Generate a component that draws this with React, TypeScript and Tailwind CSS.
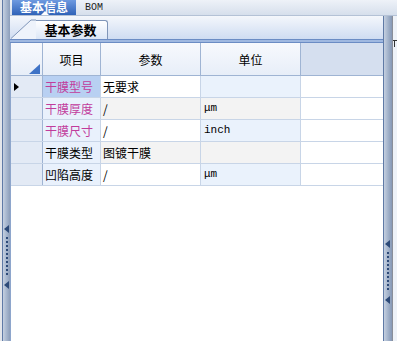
const ROWS = [
  { name: "干膜型号", value: "无要求", unit: "", pink: true },
  { name: "干膜厚度", value: "/", unit: "μm", pink: true },
  { name: "干膜尺寸", value: "/", unit: "inch", pink: true },
  { name: "干膜类型", value: "图镀干膜", unit: "", pink: false },
  { name: "凹陷高度", value: "/", unit: "μm", pink: false },
];

const Splitter = ({ offset }: { offset: string }) => (
  <div className="flex h-full w-[10px] shrink-0 border-x border-[#5f7aa6] bg-gradient-to-r from-[#c5d0e0] via-[#a3b3cb] to-[#8597b4]">
    <div className={`flex w-full flex-col items-center ${offset}`}>
      <svg width="6" height="8" viewBox="0 0 6 8">
        <path d="M5 0 L0 4 L5 8 Z" fill="#2d4a78" />
      </svg>
      <div className="mt-[4px] flex flex-col gap-[2px]">
        {Array.from({ length: 10 }).map((_, i) => (
          <div key={i} className="h-[2px] w-[2px] bg-[#2d4a78]" />
        ))}
      </div>
      <svg className="mt-[6px]" width="6" height="8" viewBox="0 0 6 8">
        <path d="M5 0 L0 4 L5 8 Z" fill="#2d4a78" />
      </svg>
    </div>
  </div>
);

const App = () => {
  return (
    <div
      className="flex h-[341px] w-[397px] overflow-hidden bg-white text-[12px] text-black"
      style={{ fontFamily: '"Noto Sans CJK SC", "Liberation Sans", sans-serif' }}
    >
      <div className="flex h-full w-[10px] shrink-0 border-r border-[#8a8f99] bg-[#e4e6ea]">
        <div className="ml-[2px] h-full w-[7px]">
          <Splitter offset="pt-[225px]" />
        </div>
      </div>

      <div className="flex min-w-0 flex-1 flex-col">
        <div className="flex h-[16px] shrink-0 items-stretch border-b border-[#b4c2d6] bg-gradient-to-b from-[#eef2f8] to-[#d6dfec]">
          <div className="relative ml-[2px] flex w-[64px] items-center justify-center bg-gradient-to-b from-[#6e9ae0] to-[#2f62b8] pb-[2px] text-[12px] leading-none font-bold text-white">
            基本信息
            <div className="absolute bottom-0 left-[29px] h-0 w-0 border-x-[4px] border-b-[4px] border-x-transparent border-b-white" />
          </div>
          <div
            className="ml-[9px] flex items-center text-[10px] text-[#222]"
            style={{ fontFamily: '"Liberation Mono", monospace' }}
          >
            BOM
          </div>
        </div>

        <div className="flex min-h-0 flex-1">
          <div className="flex min-w-0 flex-1 flex-col">
            <div className="relative flex h-[23px] shrink-0 items-end bg-gradient-to-b from-[#f4f7fc] to-[#cfdcf1]">
              <svg className="absolute bottom-0 left-[1px]" width="25" height="20" viewBox="0 0 25 20">
                <path d="M0 19.5 L20 1 L25 1 L25 20 L0 20 Z" fill="#eef3fb" />
                <path d="M0 19.5 L20 1 L25 1" fill="none" stroke="#7f95b8" />
              </svg>
              <div className="ml-[24px] flex h-[19px] w-[74px] items-center justify-center rounded-tr-[3px] border-t border-r border-[#7f95b8] bg-gradient-to-b from-[#ffffff] to-[#dbe6f6] text-[13px] font-bold">
                基本参数
              </div>
            </div>
            <div className="h-[4px] shrink-0 border-y border-[#6b8cc4] bg-[#9fb8e0]" />

            <div className="flex min-h-0 flex-1 flex-col border-l border-[#8ea6cc] bg-white">
              <div className="flex h-[33px] shrink-0 border-b border-[#9fb4d3] bg-gradient-to-b from-[#f7f9fd] to-[#e7eef8]">
                <div className="relative w-[32px] shrink-0 border-r border-[#9fb4d3]">
                  <svg className="absolute right-[2px] bottom-[1px]" width="11" height="10" viewBox="0 0 11 10">
                    <path d="M11 0 L11 10 L0 10 Z" fill="#3f73c6" />
                  </svg>
                </div>
                <div className="flex w-[58px] shrink-0 items-center justify-center border-r border-[#9fb4d3] pt-[2px]">项目</div>
                <div className="flex w-[100px] shrink-0 items-center justify-center border-r border-[#9fb4d3] pt-[2px]">参数</div>
                <div className="flex w-[100px] shrink-0 items-center justify-center border-r border-[#9fb4d3] pt-[2px]">单位</div>
                <div className="flex-1 bg-[#d5dfef]" />
              </div>

              {ROWS.map((row, i) => (
                <div key={row.name} className="flex h-[22px] shrink-0 border-b border-[#c8d5e7]">
                  <div className="flex w-[32px] shrink-0 items-center border-r border-[#9fb4d3] bg-[#e3eaf5] pl-[3px]">
                    {i === 0 && (
                      <svg width="5" height="8" viewBox="0 0 5 8">
                        <path d="M0 0 L5 4 L0 8 Z" fill="#000" />
                      </svg>
                    )}
                  </div>
                  <div
                    className={`flex w-[58px] shrink-0 items-center border-r border-[#c8d5e7] pl-[2px] ${
                      i === 0 ? "bg-[#b8d0f2]" : "bg-[#e9f1fc]"
                    } ${row.pink ? "text-[#c13c9c]" : "text-black"}`}
                  >
                    {row.name}
                  </div>
                  <div
                    className={`flex w-[100px] shrink-0 items-center border-r border-[#c8d5e7] pl-[2px] ${
                      i % 2 === 1 ? "bg-[#f3f3f3]" : "bg-white"
                    }`}
                  >
                    {row.value}
                  </div>
                  <div
                    className={`flex w-[100px] shrink-0 items-center border-r border-[#c8d5e7] pl-[3px] text-[11px] ${
                      i % 2 === 1 ? "bg-[#f3f3f3]" : "bg-[#eaf2fc]"
                    }`}
                    style={{ fontFamily: '"Liberation Mono", monospace' }}
                  >
                    {row.unit}
                  </div>
                  <div className="flex-1 bg-white" />
                </div>
              ))}
            </div>
          </div>

          <div className="h-full w-[9px] shrink-0">
            <Splitter offset="pt-[224px]" />
          </div>
          <div className="w-[5px] shrink-0 border-l border-[#8a8f99] bg-[#eef2f8] pt-[24px]">
            <div className="h-[1px] w-full bg-[#333]" />
            <div className="ml-[1px] h-[6px] w-[1px] bg-[#333]" />
          </div>
        </div>
      </div>
    </div>
  );
};

export default App;
